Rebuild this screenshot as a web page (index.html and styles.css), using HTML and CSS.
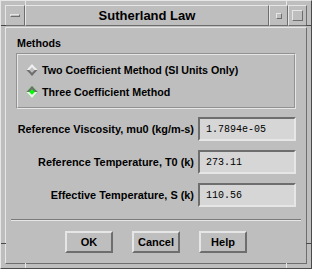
FILE: index.html
```html
<!DOCTYPE html>
<html lang="en">
<head>
  <meta charset="UTF-8">
  <title>Sutherland Law</title>
  <link rel="stylesheet" href="styles.css">
</head>
<body>
  <div class="window">
    <span class="notch notch-tl-h"></span>
    <span class="notch notch-tl-v"></span>
    <span class="notch notch-tr-h"></span>
    <span class="notch notch-tr-v"></span>
    <span class="notch notch-bl-h"></span>
    <span class="notch notch-bl-v"></span>
    <span class="notch notch-br-h"></span>
    <span class="notch notch-br-v"></span>

    <div class="titlebar">
      <div class="tb-cell tb-menu"><span class="menu-bar"></span></div>
      <div class="tb-cell tb-title">Sutherland Law</div>
      <div class="tb-cell tb-min"><span class="min-box"></span></div>
      <div class="tb-cell tb-max"><span class="max-box"></span></div>
    </div>

    <div class="content">
      <div class="group-label">Methods</div>
      <div class="group">
        <div class="radio-row">
          <span class="diamond"></span>
          <span>Two Coefficient Method (SI Units Only)</span>
        </div>
        <div class="radio-row">
          <span class="diamond selected"></span>
          <span>Three Coefficient Method</span>
        </div>
      </div>

      <div class="fields">
        <div class="field-row">
          <label for="mu0">Reference Viscosity, mu0 (kg/m-s)</label>
          <input id="mu0" type="text" value="1.7894e-05">
        </div>
        <div class="field-row">
          <label for="t0">Reference Temperature, T0 (k)</label>
          <input id="t0" type="text" value="273.11">
        </div>
        <div class="field-row">
          <label for="s">Effective Temperature, S (k)</label>
          <input id="s" type="text" value="110.56">
        </div>
      </div>

      <div class="separator"></div>

      <div class="buttons">
        <button class="push">OK</button>
        <button class="push">Cancel</button>
        <button class="push">Help</button>
      </div>
    </div>
  </div>
</body>
</html>
```

FILE: styles.css
```css
/* Motif style dialog */
body {
  margin: 0;
  background: #bebebe;
  font-family: "Liberation Sans", Arial, sans-serif;
  font-weight: bold;
  font-size: 10.7px;
  color: #000;
}
.window {
  position: relative;
  box-sizing: border-box;
  width: 312px;
  height: 269px;
  padding: 4px;
  background: #bebebe;
  border-top: 1px solid #e6e6e6;
  border-left: 1px solid #e6e6e6;
  border-bottom: 1px solid #4a4a4a;
  border-right: 1px solid #4a4a4a;
  display: flex;
  flex-direction: column;
}
/* resize handle marks on the frame */
.notch {
  position: absolute;
  background: #e6e6e6;
}
.notch-tl-h { left: 0; top: 24px; width: 5px; height: 1px; background: #4a4a4a; }
.notch-tl-v { left: 24px; top: 0; width: 1px; height: 5px; }
.notch-tr-h { right: 0; top: 24px; width: 5px; height: 1px; background: #4a4a4a; }
.notch-tr-v { right: 24px; top: 0; width: 1px; height: 5px; }
.notch-bl-h { left: 0; bottom: 24px; width: 5px; height: 1px; background: #4a4a4a; }
.notch-bl-v { left: 24px; bottom: 0; width: 1px; height: 5px; }
.notch-br-h { right: 0; bottom: 24px; width: 5px; height: 1px; background: #4a4a4a; }
.notch-br-v { right: 24px; bottom: 0; width: 1px; height: 5px; }

.titlebar {
  display: flex;
  height: 21px;
  flex: none;
}
.tb-cell {
  box-sizing: border-box;
  border-top: 1px solid #e6e6e6;
  border-left: 1px solid #e6e6e6;
  border-bottom: 1px solid #6e6e6e;
  border-right: 1px solid #6e6e6e;
  display: flex;
  align-items: center;
  justify-content: center;
}
.tb-menu { width: 20px; }
.tb-title {
  flex: 1;
  font-size: 13px;
}
.tb-min { width: 19px; }
.tb-max { width: 19px; }
.menu-bar {
  width: 10px;
  height: 3px;
  box-sizing: border-box;
  border-top: 1px solid #e6e6e6;
  border-left: 1px solid #e6e6e6;
  border-bottom: 1px solid #6e6e6e;
  border-right: 1px solid #6e6e6e;
}
.min-box {
  width: 4px;
  height: 4px;
  border-top: 1px solid #e6e6e6;
  border-left: 1px solid #e6e6e6;
  border-bottom: 1px solid #6e6e6e;
  border-right: 1px solid #6e6e6e;
}
.max-box {
  width: 11px;
  height: 11px;
  box-sizing: border-box;
  border-top: 1px solid #e6e6e6;
  border-left: 1px solid #e6e6e6;
  border-bottom: 1px solid #6e6e6e;
  border-right: 1px solid #6e6e6e;
}

.content {
  flex: 1;
  box-sizing: border-box;
  margin-top: 1px;
  border-top: 1px solid #e6e6e6;
  border-left: 1px solid #e6e6e6;
  border-bottom: 1px solid #6e6e6e;
  border-right: 1px solid #6e6e6e;
  padding: 8px 10px 0 10px;
  display: flex;
  flex-direction: column;
}
.group-label {
  line-height: 14px;
  padding-left: 1px;
}
.group {
  margin-top: 3px;
  border: 2px groove #e6e6e6;
  padding: 8px 0 8px 10px;
  display: flex;
  flex-direction: column;
  gap: 8px;
}
.radio-row {
  display: flex;
  align-items: center;
  gap: 6px;
  height: 14px;
  white-space: nowrap;
}
.diamond {
  box-sizing: border-box;
  width: 8px;
  height: 8px;
  transform: rotate(45deg);
  background: #bebebe;
  border-top: 2px solid #f0f0f0;
  border-left: 2px solid #f0f0f0;
  border-bottom: 2px solid #6e6e6e;
  border-right: 2px solid #6e6e6e;
}
.diamond.selected {
  background: #00ff00;
  border-top-color: #6e6e6e;
  border-left-color: #6e6e6e;
  border-bottom-color: #f0f0f0;
  border-right-color: #f0f0f0;
}

.fields {
  margin-top: 8px;
  display: flex;
  flex-direction: column;
  gap: 9px;
  font-size: 10.9px;
}
.field-row {
  display: flex;
  align-items: center;
  justify-content: flex-end;
  gap: 4px;
  height: 24px;
  white-space: nowrap;
}
.field-row input {
  box-sizing: border-box;
  width: 98px;
  height: 24px;
  margin: 0;
  padding: 0 0 0 6px;
  background: #d6d6d6;
  border-top: 2px solid #6e6e6e;
  border-left: 2px solid #6e6e6e;
  border-bottom: 2px solid #e6e6e6;
  border-right: 2px solid #e6e6e6;
  font-family: "Liberation Mono", "Courier New", monospace;
  font-size: 10px;
  color: #000;
  outline: none;
}

.separator {
  margin: 12px -5px 0 -5px;
  height: 0;
  border-top: 1px solid #7a7a7a;
  border-bottom: 1px solid #e6e6e6;
}
.buttons {
  display: flex;
  justify-content: center;
  gap: 19px;
  margin-top: 10px;
}
.push {
  box-sizing: border-box;
  width: 48px;
  height: 22px;
  background: #bebebe;
  border-top: 2px solid #e6e6e6;
  border-left: 2px solid #e6e6e6;
  border-bottom: 2px solid #6e6e6e;
  border-right: 2px solid #6e6e6e;
  font-family: "Liberation Sans", Arial, sans-serif;
  font-weight: bold;
  font-size: 11px;
  color: #000;
  padding: 0;
}
```
